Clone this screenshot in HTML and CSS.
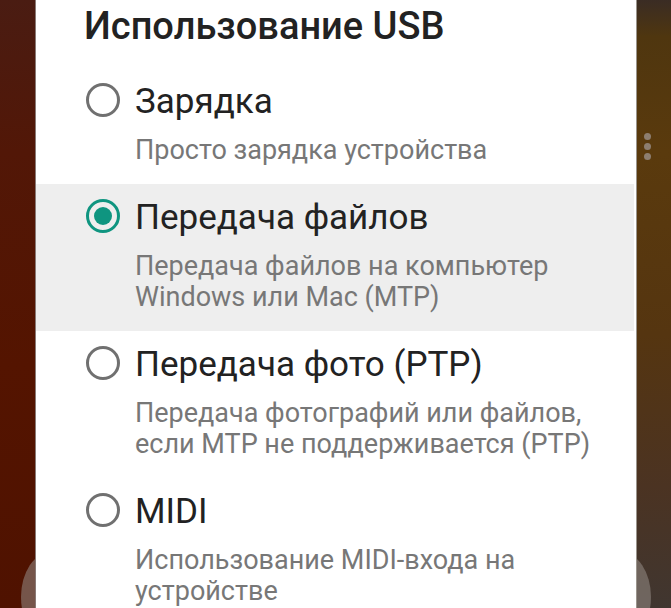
FILE: index.html
```html
<!DOCTYPE html>
<html lang="ru">
<head>
<meta charset="utf-8">
<title>Использование USB</title>
<link rel="stylesheet" href="styles.css">
</head>
<body>
<div class="screen">
  <div class="side side-left"><div class="bubble bubble-left"></div></div>
  <div class="dialog">
    <h1 class="title">Использование USB</h1>
    <div class="option">
      <span class="radio"></span>
      <div class="texts">
        <div class="label">Зарядка</div>
        <div class="desc">Просто зарядка устройства</div>
      </div>
    </div>
    <div class="option selected">
      <span class="radio checked"></span>
      <div class="texts">
        <div class="label">Передача файлов</div>
        <div class="desc">Передача файлов на компьютер<br>Windows или Mac (MTP)</div>
      </div>
    </div>
    <div class="option">
      <span class="radio"></span>
      <div class="texts">
        <div class="label">Передача фото (PTP)</div>
        <div class="desc">Передача фотографий или файлов,<br>если MTP не поддерживается (PTP)</div>
      </div>
    </div>
    <div class="option">
      <span class="radio"></span>
      <div class="texts">
        <div class="label">MIDI</div>
        <div class="desc">Использование MIDI-входа на<br>устройстве</div>
      </div>
    </div>
  </div>
  <div class="side side-right">
    <div class="dots"><span></span><span></span><span></span></div>
    <div class="bubble bubble-right"></div>
  </div>
</div>
</body>
</html>
```
FILE: styles.css
```css
html, body {
  margin: 0;
  padding: 0;
  height: 100%;
  overflow: hidden;
}
body {
  font-family: Roboto, "Noto Sans", sans-serif;
  background: #fff;
}
.screen {
  display: flex;
  width: 671px;
  height: 608px;
  overflow: hidden;
}
.side {
  position: relative;
  overflow: hidden;
  flex: none;
}
.side-left {
  width: 35px;
  background: linear-gradient(180deg, #4a1c12 0%, #521707 25%, #541400 60%, #4f1200 100%);
  border-right: 1px solid #8a7a76;
}
.side-right {
  width: 34px;
  background: linear-gradient(180deg, #3a2c24 0%, #4f360f 6%, #5a3a0d 25%, #553510 55%, #4b3322 80%, #403630 100%);
  border-left: 1px solid #9a948c;
}
.dialog {
  flex: 1;
  background: #fff;
  display: flex;
  flex-direction: column;
}
.title {
  margin: 4px 0 20px 48px;
  font-size: 38px;
  line-height: 44px;
  font-weight: 500;
  color: #222;
}
.option {
  display: grid;
  grid-template-columns: 34px 1fr;
  column-gap: 15px;
  padding: 12px 0 18px 50px;
}
.option.selected {
  background: #eeeeee;
  margin-right: 2px;
}
.radio {
  box-sizing: border-box;
  width: 34px;
  height: 34px;
  margin-top: 3px;
  border: 3px solid #707070;
  border-radius: 50%;
  display: flex;
  align-items: center;
  justify-content: center;
}
.radio.checked {
  border-color: #0f9580;
}
.radio.checked::after {
  content: "";
  width: 18px;
  height: 18px;
  border-radius: 50%;
  background: #0f9580;
}
.label {
  font-size: 35px;
  line-height: 44px;
  color: #222;
}
.desc {
  margin-top: 11px;
  font-size: 27px;
  line-height: 31px;
  color: #777;
}
.dots {
  position: absolute;
  left: 7px;
  top: 133px;
  display: flex;
  flex-direction: column;
  gap: 3px;
}
.dots span {
  width: 7px;
  height: 7px;
  border-radius: 50%;
  background: #8d7e70;
}
.bubble {
  position: absolute;
  width: 60px;
  height: 90px;
  border-radius: 50%;
  background: rgba(150, 140, 135, 0.55);
  top: 552px;
}
.bubble-left {
  left: 21px;
}
.bubble-right {
  left: -46px;
}
```
